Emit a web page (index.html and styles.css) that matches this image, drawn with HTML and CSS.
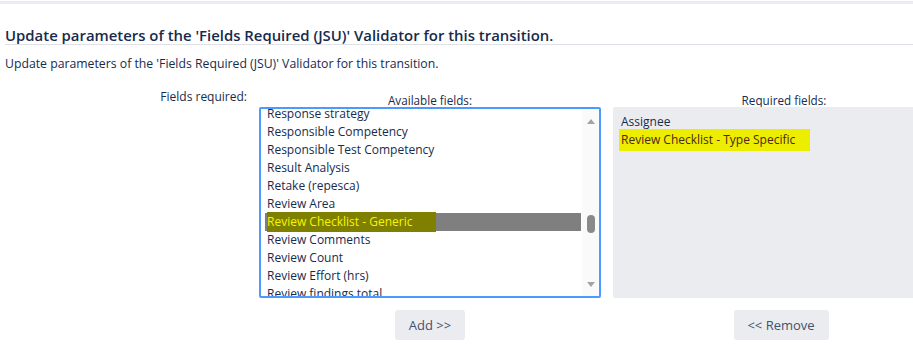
FILE: index.html
```html
<!DOCTYPE html>
<html>
<head>
<meta charset="utf-8">
<link rel="stylesheet" href="styles.css">
</head>
<body>
<div class="topline"></div>
<h2 class="title">Update parameters of the 'Fields Required (JSU)' Validator for this transition.</h2>
<p class="desc">Update parameters of the 'Fields Required (JSU)' Validator for this transition.</p>
<div class="form-row">
  <div class="label">Fields required:</div>
  <div class="col">
    <div class="col-head">Available fields:</div>
    <div class="listbox">
      <div class="list">
        <div class="opt">Response strategy</div>
        <div class="opt">Responsible Competency</div>
        <div class="opt">Responsible Test Competency</div>
        <div class="opt">Result Analysis</div>
        <div class="opt">Retake (repesca)</div>
        <div class="opt">Review Area</div>
        <div class="opt selected"><span class="mark-dark">Review Checklist - Generic</span></div>
        <div class="opt">Review Comments</div>
        <div class="opt">Review Count</div>
        <div class="opt">Review Effort (hrs)</div>
        <div class="opt">Review findings total</div>
      </div>
      <div class="scrollbar">
        <div class="arrow up"></div>
        <div class="track"><div class="thumb"></div></div>
        <div class="arrow down"></div>
      </div>
    </div>
    <div class="btn-row"><button class="btn">Add &gt;&gt;</button></div>
  </div>
  <div class="col">
    <div class="col-head">Required fields:</div>
    <div class="reqbox">
      <div class="ropt">Assignee</div>
      <div class="ropt"><span class="mark">Review Checklist - Type Specific</span></div>
    </div>
    <div class="btn-row"><button class="btn remove">&lt;&lt; Remove</button></div>
  </div>
</div>
</body>
</html>
```

FILE: styles.css
```css
html, body {
  margin: 0;
  padding: 0;
  background: #fff;
  overflow: hidden;
}
body {
  font-family: "Open Sans", "Noto Sans", sans-serif;
  color: #172b4d;
  font-size: 12px;
  width: 913px;
  height: 345px;
}
.topline {
  margin-top: 1px;
  height: 3px;
  background: #ebecf2;
}
.title {
  margin: 22px 0 0 5px;
  padding-bottom: 0;
  border-bottom: 1px solid #dfe1e6;
  font-size: 14.9px;
  font-weight: 600;
  line-height: 18px;
}
.desc {
  margin: 11px 0 0 5px;
  font-size: 12.25px;
  line-height: 16px;
}
.form-row {
  display: flex;
  margin-top: 17px;
  width: 1000px;
}
.label {
  width: 247px;
  text-align: right;
  font-size: 12px;
  line-height: 16px;
}
.col {
  width: 342px;
  margin-left: 12px;
  display: flex;
  flex-direction: column;
}
.col-head {
  text-align: center;
  font-size: 11.7px;
  line-height: 16px;
  margin-top: 3px;
  height: 15px;
}
.listbox {
  height: 191px;
  border: 2px solid #4c9aff;
  border-radius: 2px;
  box-sizing: border-box;
  display: flex;
  overflow: hidden;
  background: #fff;
}
.list {
  flex: 1;
  margin-top: -4px;
  padding-left: 4px;
}
.opt {
  height: 18px;
  line-height: 18px;
  padding-left: 2px;
  font-size: 12px;
  white-space: nowrap;
}
.opt.selected {
  background: #7f7f7f;
  margin-right: 1px;
}
.mark-dark {
  background: #7f7f00;
  color: #f6f600;
  padding: 1px 24px 2px 0;
}
.scrollbar {
  width: 17px;
  background: #fafafa;
  display: flex;
  flex-direction: column;
  align-items: center;
}
.arrow {
  width: 0;
  height: 0;
  border-left: 4px solid transparent;
  border-right: 4px solid transparent;
}
.arrow.up {
  margin-top: 10px;
  border-bottom: 5px solid #a3a3a3;
}
.arrow.down {
  margin-bottom: 9px;
  border-top: 5px solid #a3a3a3;
}
.track {
  flex: 1;
  width: 100%;
  display: flex;
  justify-content: center;
}
.thumb {
  margin-top: 91px;
  width: 8px;
  height: 18px;
  border-radius: 4px;
  background: #8a8a8a;
}
.reqbox {
  height: 191px;
  box-sizing: border-box;
  background: #ebecf0;
  padding: 6px 8px;
  border-radius: 2px;
}
.ropt {
  height: 18px;
  line-height: 18px;
  font-size: 12px;
  white-space: nowrap;
}
.mark {
  background: #eded00;
  color: #4a2a14;
  padding: 2px 15px 3px 2px;
  margin-left: -2px;
}
.btn-row {
  display: flex;
  justify-content: center;
  margin-top: 12px;
}
.btn {
  font-family: "Open Sans", "Noto Sans", sans-serif;
  font-size: 13px;
  color: #42526e;
  background: #ebecf0;
  border: none;
  border-radius: 3px;
  height: 30px;
  width: 70px;
  padding: 0;
}
.btn.remove {
  width: 95px;
  margin-left: -6px;
}
```
